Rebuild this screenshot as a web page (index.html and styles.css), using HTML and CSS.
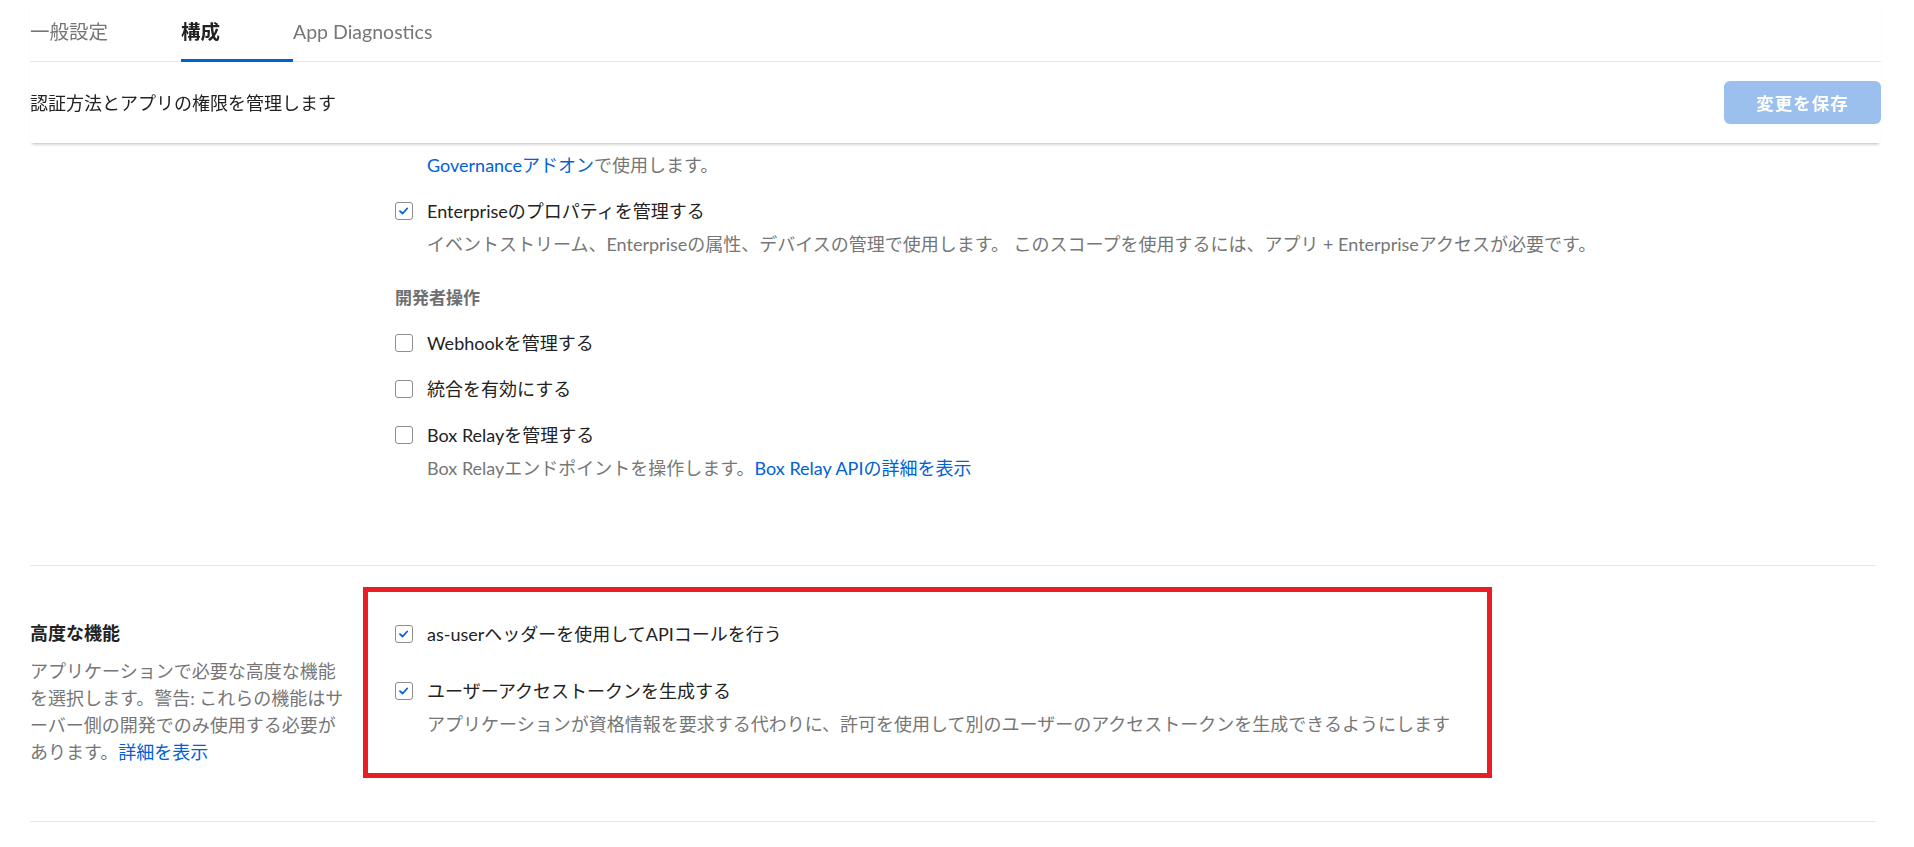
FILE: index.html
```html
<!DOCTYPE html>
<html lang="ja">
<head>
<meta charset="utf-8">
<title>構成</title>
<link rel="stylesheet" href="styles.css">
</head>
<body>
<header class="app-header">
  <nav class="tabs">
    <a class="tab">一般設定</a>
    <a class="tab tab-active">構成</a>
    <a class="tab">App Diagnostics</a>
  </nav>
  <div class="subheader">
    <p class="subheader-text">認証方法とアプリの権限を管理します</p>
    <button class="btn-save" disabled>変更を保存</button>
  </div>
</header>

<main class="content">
  <section class="section section-scopes">
    <div class="section-info"></div>
    <div class="options">
      <div class="option">
        <label class="option-row"><span class="checkbox"></span>リテンションポリシーを管理する</label>
        <p class="option-desc"><a class="link">Governanceアドオン</a>で使用します。</p>
      </div>
      <div class="option">
        <label class="option-row"><span class="checkbox checked"><svg viewBox="0 0 18 18" width="16" height="16"><path d="M4.5 9.2 L7.4 11.8 L12.6 6.2" fill="none" stroke="#0061d5" stroke-width="2" stroke-linecap="round" stroke-linejoin="round"/></svg></span>Enterpriseのプロパティを管理する</label>
        <p class="option-desc">イベントストリーム、Enterpriseの属性、デバイスの管理で使用します。 このスコープを使用するには、アプリ + Enterpriseアクセスが必要です。</p>
      </div>
      <h4 class="group-title">開発者操作</h4>
      <div class="option">
        <label class="option-row"><span class="checkbox"></span>Webhookを管理する</label>
      </div>
      <div class="option">
        <label class="option-row"><span class="checkbox"></span>統合を有効にする</label>
      </div>
      <div class="option">
        <label class="option-row"><span class="checkbox"></span>Box Relayを管理する</label>
        <p class="option-desc">Box Relayエンドポイントを操作します。<a class="link">Box Relay APIの詳細を表示</a></p>
      </div>
    </div>
  </section>

  <section class="section section-advanced">
    <div class="section-info advanced-info">
      <h3 class="section-title">高度な機能</h3>
      <p class="section-desc">アプリケーションで必要な高度な機能を選択します。警告: これらの機能はサーバー側の開発でのみ使用する必要があります。<a class="link">詳細を表示</a></p>
    </div>
    <div class="highlight">
      <div class="options options-wide">
        <div class="option">
          <label class="option-row"><span class="checkbox checked"><svg viewBox="0 0 18 18" width="16" height="16"><path d="M4.5 9.2 L7.4 11.8 L12.6 6.2" fill="none" stroke="#0061d5" stroke-width="2" stroke-linecap="round" stroke-linejoin="round"/></svg></span>as-userヘッダーを使用してAPIコールを行う</label>
        </div>
        <div class="option">
          <label class="option-row"><span class="checkbox checked"><svg viewBox="0 0 18 18" width="16" height="16"><path d="M4.5 9.2 L7.4 11.8 L12.6 6.2" fill="none" stroke="#0061d5" stroke-width="2" stroke-linecap="round" stroke-linejoin="round"/></svg></span>ユーザーアクセストークンを生成する</label>
          <p class="option-desc">アプリケーションが資格情報を要求する代わりに、許可を使用して別のユーザーのアクセストークンを生成できるようにします</p>
        </div>
      </div>
    </div>
  </section>
</main>
</body>
</html>
```

FILE: styles.css
```css
html, body {
  margin: 0;
  padding: 0;
  background: #ffffff;
}

body {
  font-family: Lato, "Noto Sans CJK JP", sans-serif;
  color: #222222;
  font-size: 18px;
}

.link {
  color: #0061d5;
  text-decoration: none;
}

/* Header (stays on top of scrolled content) */
.app-header {
  position: fixed;
  top: 0;
  left: 30px;
  width: 1851px;
  background: #ffffff;
  z-index: 10;
  box-shadow: 0 3px 3px -2px rgba(0, 0, 0, 0.28);
}

.tabs {
  display: flex;
  border-bottom: 1px solid #e8e8e8;
}

.tab {
  padding: 18px 73px 13px 0;
  line-height: 28px;
  font-size: 19.5px;
  color: #767676;
  border-bottom: 3px solid transparent;
  margin-bottom: -1px;
}

.tab-active {
  color: #222222;
  font-weight: 700;
  border-bottom-color: #0061d5;
}

.subheader {
  height: 81px;
  display: flex;
  align-items: center;
  justify-content: space-between;
}

.subheader-text {
  margin: 0;
  font-size: 18px;
  line-height: 26px;
  color: #222222;
}

.btn-save {
  width: 157px;
  height: 43px;
  border: none;
  border-radius: 6px;
  background: #9bc0ee;
  color: #ffffff;
  font-family: Lato, "Noto Sans CJK JP", sans-serif;
  font-size: 17.5px;
  font-weight: 700;
  letter-spacing: 1px;
  padding: 0;
}

/* Content */
.content {
  margin-left: 30px;
  width: 1846px;
  padding-top: 119px;
}

.section {
  display: grid;
  grid-template-columns: 365px 1fr;
  border-bottom: 1px solid #e8e8e8;
}

.section-scopes {
  padding-bottom: 84px;
}

.section-advanced {
  grid-template-columns: 333px auto;
  align-items: start;
  padding: 21px 0 43px;
}

.advanced-info {
  padding-top: 34px;
}

.section-title {
  margin: 0;
  font-size: 18px;
  line-height: 24px;
  font-weight: 700;
  color: #222222;
}

.section-desc {
  margin: 13px 0 0;
  width: 320px;
  font-size: 18px;
  line-height: 27px;
  color: #767676;
  line-break: normal;
}

.options {
  display: flex;
  flex-direction: column;
  gap: 20px;
}

.options-wide {
  gap: 31px;
}

.option-row {
  display: flex;
  align-items: center;
  gap: 14px;
  font-size: 18px;
  line-height: 26px;
  color: #222222;
}

.checkbox {
  flex: none;
  width: 18px;
  height: 18px;
  box-sizing: border-box;
  border: 1px solid #8e8e8e;
  border-radius: 3px;
  background: #ffffff;
  display: flex;
  align-items: center;
  justify-content: center;
}

.checkbox svg {
  display: block;
}

.option-desc {
  margin: 7px 0 0 32px;
  font-size: 18px;
  line-height: 26px;
  color: #767676;
}

.group-title {
  margin: 0;
  padding-top: 9px;
  font-size: 17px;
  line-height: 24px;
  font-weight: 700;
  color: #6f6f6f;
}

.highlight {
  width: 1129px;
  box-sizing: border-box;
  border: 5px solid #e91e25;
  padding: 29px 27px 36px;
}
```
